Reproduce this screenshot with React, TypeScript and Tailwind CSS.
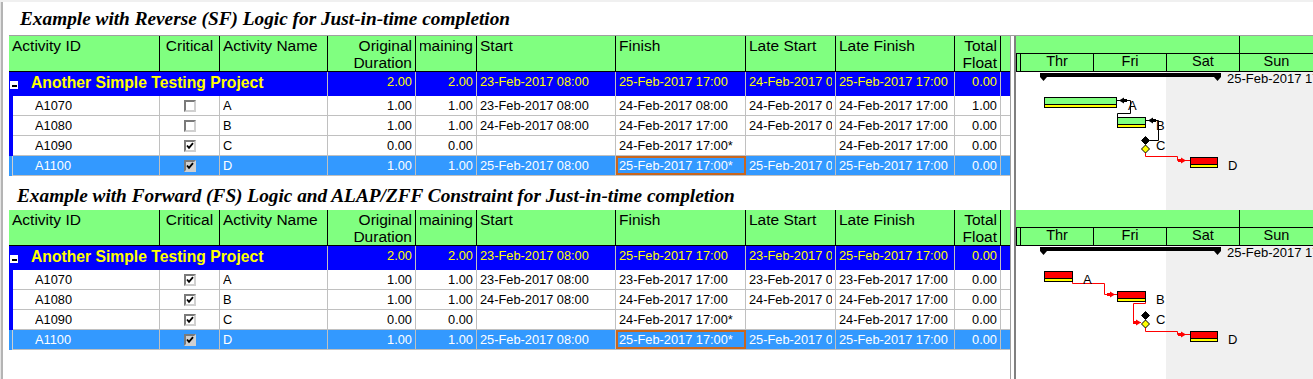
import React from "react";

type Row = {
  id: string;
  crit: boolean;
  name: string;
  od: string;
  rd: string;
  start: string;
  finish: string;
  ls: string;
  lf: string;
  tf: string;
  sel?: boolean;
};

const sfRows: Row[] = [
  { id: "A1070", crit: false, name: "A", od: "1.00", rd: "1.00", start: "23-Feb-2017 08:00", finish: "24-Feb-2017 08:00", ls: "24-Feb-2017 08:00", lf: "24-Feb-2017 17:00", tf: "1.00" },
  { id: "A1080", crit: false, name: "B", od: "1.00", rd: "1.00", start: "24-Feb-2017 08:00", finish: "24-Feb-2017 17:00", ls: "24-Feb-2017 08:00", lf: "24-Feb-2017 17:00", tf: "0.00" },
  { id: "A1090", crit: true, name: "C", od: "0.00", rd: "0.00", start: "", finish: "24-Feb-2017 17:00*", ls: "", lf: "24-Feb-2017 17:00", tf: "0.00" },
  { id: "A1100", crit: true, name: "D", od: "1.00", rd: "1.00", start: "25-Feb-2017 08:00", finish: "25-Feb-2017 17:00*", ls: "25-Feb-2017 08:00", lf: "25-Feb-2017 17:00", tf: "0.00", sel: true },
];

const fsRows: Row[] = [
  { id: "A1070", crit: true, name: "A", od: "1.00", rd: "1.00", start: "23-Feb-2017 08:00", finish: "23-Feb-2017 17:00", ls: "23-Feb-2017 08:00", lf: "23-Feb-2017 17:00", tf: "0.00" },
  { id: "A1080", crit: true, name: "B", od: "1.00", rd: "1.00", start: "24-Feb-2017 08:00", finish: "24-Feb-2017 17:00", ls: "24-Feb-2017 08:00", lf: "24-Feb-2017 17:00", tf: "0.00" },
  { id: "A1090", crit: true, name: "C", od: "0.00", rd: "0.00", start: "", finish: "24-Feb-2017 17:00*", ls: "", lf: "24-Feb-2017 17:00", tf: "0.00" },
  { id: "A1100", crit: true, name: "D", od: "1.00", rd: "1.00", start: "25-Feb-2017 08:00", finish: "25-Feb-2017 17:00*", ls: "25-Feb-2017 08:00", lf: "25-Feb-2017 17:00", tf: "0.00", sel: true },
];

const sfGroup = ["2.00", "2.00", "23-Feb-2017 08:00", "25-Feb-2017 17:00", "24-Feb-2017 08:00", "25-Feb-2017 17:00", "0.00"];
const fsGroup = ["2.00", "2.00", "23-Feb-2017 08:00", "25-Feb-2017 17:00", "23-Feb-2017 08:00", "25-Feb-2017 17:00", "0.00"];

const Cell = ({
  w,
  right,
  pad = "px-[3px]",
  last,
  className = "",
  children,
}: {
  w: string;
  right?: boolean;
  pad?: string;
  last?: boolean;
  className?: string;
  children?: React.ReactNode;
}) => (
  <div className={`${w} shrink-0 ${last ? "" : "border-r"} border-[#c0c0c0] ${pad} ${className}`}>
    <div className={`flex overflow-hidden whitespace-nowrap ${right ? "justify-end" : ""}`}>
      <span className="shrink-0">{children}</span>
    </div>
  </div>
);

const Check = ({ on, sel }: { on: boolean; sel?: boolean }) => (
  <div
    className={`w-[12px] h-[12px] border-2 border-t-[#7a7a7a] border-l-[#7a7a7a] border-r-[#d0d0d0] border-b-[#d0d0d0] flex items-center justify-center ${
      sel ? "bg-[#cfcfcf]" : "bg-white"
    }`}
  >
    {on && (
      <svg width="8" height="8" viewBox="0 0 8 8">
        <path d="M1 3.5 L3 5.8 L7 1.2" stroke="#000" strokeWidth="1.8" fill="none" />
      </svg>
    )}
  </div>
);

const Header = () => (
  <div className="flex h-[36px] border-b border-black bg-[#80ff80] text-[15.5px] leading-[17px] text-black">
    <div className="w-[151px] shrink-0 border-r border-black pl-[3px] pt-px">Activity ID</div>
    <div className="w-[60px] shrink-0 border-r border-black pt-px text-center">Critical</div>
    <div className="w-[108px] shrink-0 border-r border-black pl-[3px] pt-px">Activity Name</div>
    <div className="w-[88px] shrink-0 border-r border-black pr-[3px] pt-px text-right">
      Original
      <br />
      Duration
    </div>
    <div className="w-[61px] shrink-0 border-r border-black pl-[4px] pr-[3px] pt-px">
      <div className="flex justify-end overflow-hidden">
        <span className="shrink-0 whitespace-nowrap">Remaining</span>
      </div>
    </div>
    <div className="w-[139px] shrink-0 border-r border-black pl-[3px] pt-px">Start</div>
    <div className="w-[130px] shrink-0 border-r border-black pl-[3px] pt-px">Finish</div>
    <div className="w-[90px] shrink-0 border-r border-black pl-[3px] pt-px">Late Start</div>
    <div className="w-[119px] shrink-0 border-r border-black pl-[3px] pt-px">Late Finish</div>
    <div className="w-[46px] shrink-0 border-r border-black pr-[3px] pt-px text-right">
      Total
      <br />
      Float
    </div>
    <div className="w-[9px] shrink-0" />
  </div>
);

const GroupRow = ({ v }: { v: string[] }) => (
  <div className="flex h-[24px] bg-[#0000ff] text-[#ffff00] leading-[20px]">
    <div className="w-[319px] shrink-0 border-r border-[#c0c0c0] flex items-start">
      <div className="mt-[9px] ml-px w-[8px] h-[8px] bg-white flex justify-center pt-[4px]">
        <div className="w-[5px] h-[2px] bg-black" />
      </div>
      <div className="ml-[13px] mt-px font-bold text-[15.7px] leading-[20px] whitespace-nowrap">
        Another Simple Testing Project
      </div>
    </div>
    <Cell w="w-[88px]" right>{v[0]}</Cell>
    <Cell w="w-[61px]" right>{v[1]}</Cell>
    <Cell w="w-[139px]">{v[2]}</Cell>
    <Cell w="w-[130px]">{v[3]}</Cell>
    <Cell w="w-[90px]">{v[4]}</Cell>
    <Cell w="w-[119px]">{v[5]}</Cell>
    <Cell w="w-[46px]" right>{v[6]}</Cell>
    <Cell w="w-[9px]" last />
  </div>
);

const DataRow = ({ r }: { r: Row }) => (
  <div className="flex h-[20px]">
    <div className={`w-[4px] shrink-0 ${r.sel ? "bg-[#3399ff] border-r border-[#d0d0d0]" : "bg-[#0000ff]"}`} />
    <div className={`flex flex-1 border-b border-[#c0c0c0] leading-[19px] ${r.sel ? "bg-[#3399ff] text-white" : "bg-white text-black"}`}>
      <Cell w="w-[147px]" pad="pl-[22px]">{r.id}</Cell>
      <div className="w-[60px] shrink-0 border-r border-[#c0c0c0] flex items-center justify-center">
        <Check on={r.crit} sel={r.sel} />
      </div>
      <Cell w="w-[108px]">{r.name}</Cell>
      <Cell w="w-[88px]" right>{r.od}</Cell>
      <Cell w="w-[61px]" right>{r.rd}</Cell>
      <Cell w="w-[139px]">{r.start}</Cell>
      <Cell w="w-[130px]" className={r.sel ? "outline-2 -outline-offset-2 outline-[#c8661e]" : ""}>
        {r.finish}
      </Cell>
      <Cell w="w-[90px]">{r.ls}</Cell>
      <Cell w="w-[119px]">{r.lf}</Cell>
      <Cell w="w-[46px]" right>{r.tf}</Cell>
      <Cell w="w-[9px]" last />
    </div>
  </div>
);

const Table = ({ group, rows }: { group: string[]; rows: Row[] }) => (
  <div className="w-[1001px]">
    <Header />
    <GroupRow v={group} />
    {rows.map((r) => (
      <DataRow key={r.id} r={r} />
    ))}
  </div>
);

const GanttHead = () => (
  <div className="h-[36px] bg-[#80ff80] border-b border-black text-[14.5px] text-black">
    <div className="flex h-[18px] border-b border-black">
      <div className="w-[224px] border-r border-black" />
      <div className="flex-1" />
    </div>
    <div className="flex h-[17px] leading-[15px]">
      <div className="w-[5px] border-x border-black" />
      <div className="w-[73px] border-r border-black text-center">Thr</div>
      <div className="w-[73px] border-r border-black text-center">Fri</div>
      <div className="w-[73px] border-r border-black text-center">Sat</div>
      <div className="w-[73px] text-center">Sun</div>
    </div>
  </div>
);

const Bar = ({ x, y, w, c }: { x: number; y: number; w: number; c: string }) => (
  <g>
    <rect x={x} y={y} width={w} height={11} fill="#000" />
    <rect x={x + 1} y={y + 1} width={w - 2} height={6} fill={c} />
    <rect x={x + 1} y={y + 8} width={w - 2} height={2} fill="#ffff00" />
  </g>
);

const Dia = ({ cx, cy, fill }: { cx: number; cy: number; fill: string }) => (
  <polygon points={`${cx},${cy - 4} ${cx + 4},${cy} ${cx},${cy + 4} ${cx - 4},${cy}`} fill={fill} stroke="#000" strokeWidth={1} />
);

// arrowheads: tip at x, pointing left / right
const ArrL = ({ x, y, c }: { x: number; y: number; c: string }) => (
  <polygon points={`${x},${y} ${x + 5},${y - 3} ${x + 5},${y - 1.5} ${x + 8},${y - 1.5} ${x + 8},${y + 1.5} ${x + 5},${y + 1.5} ${x + 5},${y + 3}`} fill={c} />
);
const ArrR = ({ x, y, c }: { x: number; y: number; c: string }) => (
  <polygon points={`${x},${y} ${x - 5},${y - 3} ${x - 5},${y - 1.5} ${x - 8},${y - 1.5} ${x - 8},${y + 1.5} ${x - 5},${y + 1.5} ${x - 5},${y + 3}`} fill={c} />
);

const lbl = { fontFamily: "'Liberation Sans', Arial, sans-serif", fontSize: 13, fill: "#000" } as const;

const Summary = () => (
  <g>
    <rect x={1040} y={1} width={181} height={4} fill="#000" />
    <polygon points="1040,5 1047,5 1043.5,9" fill="#000" />
    <polygon points="1214,5 1221,5 1217.5,9" fill="#000" />
    <text x={1227} y={11} {...lbl}>25-Feb-2017 17:00</text>
  </g>
);

const GanttSF = () => (
  <svg width="297" height="104" viewBox="1016 0 297 104" className="block">
    <Summary />
    <path d="M1117 28.5 H1130.5 V41.5 H1117.5 V45" stroke="#000" fill="none" />
    <Bar x={1044} y={25} w={73} c="#80ff80" />
    <ArrL x={1119} y={28.5} c="#000" />
    <text x={1128} y={38} {...lbl}>A</text>
    <path d="M1146 48.5 H1158.5 V68.5 H1149.5" stroke="#000" fill="none" />
    <Bar x={1117} y={45} w={29} c="#80ff80" />
    <ArrL x={1148} y={48.5} c="#000" />
    <text x={1156} y={58} {...lbl}>B</text>
    <Dia cx={1145.5} cy={68.5} fill="#000" />
    <Dia cx={1145.5} cy={77} fill="#ffff00" />
    <text x={1156} y={78} {...lbl}>C</text>
    <path d="M1145.5 81 V84.5 H1177.5 V88.5 H1190" stroke="#ff0000" fill="none" />
    <ArrR x={1186} y={88.5} c="#ff0000" />
    <Bar x={1190} y={85} w={28} c="#ff0000" />
    <text x={1228} y={98} {...lbl}>D</text>
  </svg>
);

const GanttFS = () => (
  <svg width="297" height="104" viewBox="1016 0 297 104" className="block">
    <Summary />
    <path d="M1072.5 36 V37.5 H1104.5 V48.5 H1117" stroke="#ff0000" fill="none" />
    <Bar x={1044} y={25} w={29} c="#ff0000" />
    <ArrR x={1115} y={48.5} c="#ff0000" />
    <text x={1083} y={38} {...lbl}>A</text>
    <path d="M1145.5 56 V57.5 H1133.5 V76.5 H1141" stroke="#ff0000" fill="none" />
    <Bar x={1117} y={45} w={29} c="#ff0000" />
    <text x={1156} y={58} {...lbl}>B</text>
    <Dia cx={1145.5} cy={69.5} fill="#000" />
    <Dia cx={1145.5} cy={78} fill="#ffff00" />
    <ArrR x={1141} y={76.5} c="#ff0000" />
    <text x={1156} y={78} {...lbl}>C</text>
    <path d="M1145.5 82 V85.5 H1177.5 V88.5 H1190" stroke="#ff0000" fill="none" />
    <ArrR x={1186} y={88.5} c="#ff0000" />
    <Bar x={1190} y={85} w={28} c="#ff0000" />
    <text x={1228} y={98} {...lbl}>D</text>
  </svg>
);

export default function App() {
  return (
    <div className="w-[1313px] h-[379px] overflow-hidden bg-white flex flex-col font-['Liberation_Sans',Arial,sans-serif] text-[12.8px] text-black">
      <div className="h-[2px] shrink-0 bg-[#f0f0f0]" />
      <div className="flex flex-1 min-h-0">
        <div className="w-[3px] shrink-0 flex">
          <div className="w-px bg-[#e4e4e4]" />
          <div className="w-[2px] bg-[#b4b4b4]" />
        </div>
        <div className="flex flex-col flex-1 min-w-0">
          <div className="h-[33px] shrink-0 pl-[17px] pt-[4px] font-['Liberation_Serif',serif] font-bold italic text-[19.3px] leading-[26px] whitespace-nowrap">
            Example with Reverse (SF) Logic for Just-in-time completion
          </div>
          <div className="h-px shrink-0 ml-[6px] bg-[#a0a0a0]" />
          <div className="flex flex-1 min-h-0">
            <div className="w-[1007px] shrink-0 pl-[6px]">
              <Table group={sfGroup} rows={sfRows} />
              <div className="h-[34px] pl-[8px] pt-[7px] font-['Liberation_Serif',serif] font-bold italic text-[19.3px] leading-[26px] whitespace-nowrap">
                Example with Forward (FS) Logic and ALAP/ZFF Constraint for Just-in-time completion
              </div>
              <Table group={fsGroup} rows={fsRows} />
            </div>
            <div className="w-[6px] shrink-0 flex">
              <div className="w-px bg-[#a0a0a0]" />
              <div className="w-[3px] bg-white" />
              <div className="w-[2px] bg-[#808080]" />
            </div>
            <div className="w-[297px] shrink-0 bg-[linear-gradient(to_right,#ffffff_150px,#f0f0f0_150px)]">
              <GanttHead />
              <GanttSF />
              <div className="h-[34px]" />
              <GanttHead />
              <GanttFS />
            </div>
          </div>
        </div>
      </div>
    </div>
  );
}
